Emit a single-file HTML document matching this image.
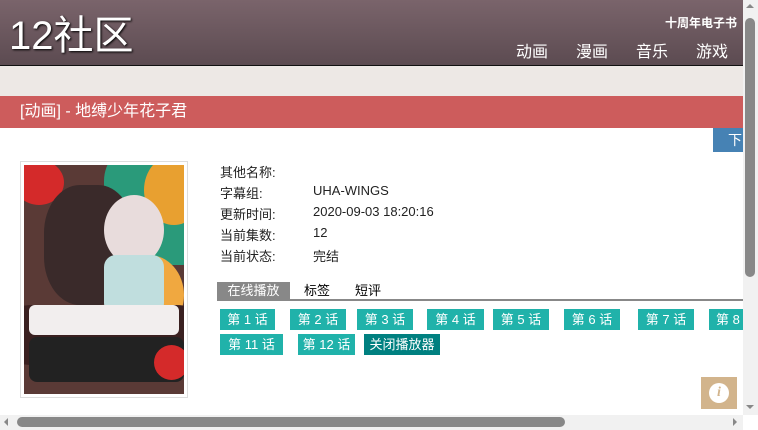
<!DOCTYPE html>
<html><head><meta charset="utf-8"><style>
*{margin:0;padding:0;box-sizing:border-box}
body{width:758px;height:430px;overflow:hidden;background:#fff;font-family:"Liberation Sans","Noto Sans CJK SC",sans-serif;position:relative}
.hdr{position:absolute;left:0;top:0;width:743px;height:66px;background:linear-gradient(#7a646b,#5c4b51);border-bottom:1px solid #111}
.logo{position:absolute;left:9px;top:13px;color:#fff;font-size:40px;line-height:46px;letter-spacing:0;text-shadow:1px 1px 2px #000}
.top{position:absolute;right:6px;top:14px;color:#fff;font-size:12px;font-weight:bold}
.nav{position:absolute;top:38px;color:#fff;font-size:16px}
.band{position:absolute;left:0;top:66px;width:743px;height:30px;background:#ede8e5}
.red{position:absolute;left:0;top:96px;width:743px;height:32px;background:#cd5c5c;color:#fff;font-size:16px;line-height:32px;padding-left:20px}
.blue{position:absolute;left:713px;top:128px;width:30px;height:24px;background:#4682b4;color:#fff;font-size:14px;line-height:24px;padding-left:15px;overflow:hidden}
.poster{position:absolute;left:20px;top:161px;width:168px;height:237px;border:1px solid #ddd;background:#fff}
.pi{position:absolute;left:3px;top:3px;width:160px;height:229px;overflow:hidden;background:#5a3a36}
.pi div{position:absolute;border-radius:50%}
.lab{position:absolute;left:220px;font-size:13px;color:#222}
.val{position:absolute;left:313px;font-size:13px;color:#222}
.tab{position:absolute;top:282px;height:18px;font-size:13px;line-height:18px}
.line{position:absolute;left:217px;top:299px;width:526px;height:2px;background:#888}
.b{position:absolute;height:21px;background:#20b2aa;color:#fff;font-size:13px;line-height:21px;text-align:center;white-space:nowrap;overflow:hidden}
.vs{position:absolute;left:743px;top:0;width:15px;height:415px;background:#f1f1f1}
.hs{position:absolute;left:0;top:415px;width:743px;height:15px;background:#f1f1f1}
</style></head><body>
<div class="hdr">
<div class="logo">12社区</div>
<div class="top">十周年电子书</div>
<div class="nav" style="left:516px">动画</div>
<div class="nav" style="left:576px">漫画</div>
<div class="nav" style="left:636px">音乐</div>
<div class="nav" style="left:696px">游戏</div>
</div>
<div class="band"></div>
<div class="red">[动画] - 地缚少年花子君</div>
<div class="blue">下载</div>
<div class="poster"><div class="pi">
<div style="left:80px;top:-20px;width:110px;height:120px;background:#2a9a7a;border-radius:30%"></div>
<div style="left:120px;top:-10px;width:60px;height:70px;background:#e8a030"></div>
<div style="left:-10px;top:-5px;width:50px;height:45px;background:#d42a2a"></div>
<div style="left:20px;top:20px;width:90px;height:120px;background:#3a2a2a;border-radius:40%"></div>
<div style="left:80px;top:30px;width:60px;height:70px;background:#e8dcdc"></div>
<div style="left:90px;top:90px;width:70px;height:80px;background:#f0a840"></div>
<div style="left:80px;top:90px;width:60px;height:60px;background:#c0dede;border-radius:20%"></div>
<div style="left:-10px;top:140px;width:180px;height:60px;background:#3a2020;border-radius:10%"></div>
<div style="left:5px;top:140px;width:150px;height:30px;background:#f2eeee;border-radius:6px"></div>
<div style="left:5px;top:172px;width:155px;height:45px;background:#222;border-radius:8px"></div>
<div style="left:130px;top:180px;width:35px;height:35px;background:#d42a2a"></div>
</div></div>
<div class="lab" style="top:162px">其他名称:</div>
<div class="lab" style="top:183px">字幕组:</div><div class="val" style="top:183px">UHA-WINGS</div>
<div class="lab" style="top:204px">更新时间:</div><div class="val" style="top:204px">2020-09-03 18:20:16</div>
<div class="lab" style="top:225px">当前集数:</div><div class="val" style="top:225px">12</div>
<div class="lab" style="top:246px">当前状态:</div><div class="val" style="top:246px">完结</div>
<div class="tab" style="left:217px;width:73px;background:#888;color:#fff;text-align:center">在线播放</div>
<div class="tab" style="left:304px">标签</div>
<div class="tab" style="left:355px">短评</div>
<div class="line"></div>
<div class="b" style="left:220px;top:309px;width:55px">第 1 话</div>
<div class="b" style="left:290px;top:309px;width:56px">第 2 话</div>
<div class="b" style="left:357px;top:309px;width:56px">第 3 话</div>
<div class="b" style="left:427px;top:309px;width:57px">第 4 话</div>
<div class="b" style="left:493px;top:309px;width:56px">第 5 话</div>
<div class="b" style="left:564px;top:309px;width:56px">第 6 话</div>
<div class="b" style="left:638px;top:309px;width:56px">第 7 话</div>
<div class="b" style="left:709px;top:309px;width:34px;text-align:left;padding-left:7px">第 8 话</div>
<div class="b" style="left:220px;top:334px;width:63px">第 11 话</div>
<div class="b" style="left:298px;top:334px;width:57px">第 12 话</div>
<div class="b" style="left:364px;top:334px;width:76px;background:#008080">关闭播放器</div>
<div style="position:absolute;left:701px;top:377px;width:36px;height:32px;background:#d2b48c"><div style="position:absolute;left:8px;top:6px;width:20px;height:20px;border-radius:50%;background:#fff;color:#d2b48c;font:italic bold 14px 'Liberation Serif',serif;text-align:center;line-height:20px">i</div></div>
<div class="vs"><div style="position:absolute;left:3px;top:4px;border:4px solid transparent;border-bottom-color:#888;border-top:0"></div><div style="position:absolute;left:2px;top:18px;width:10px;height:259px;background:#888;border-radius:5px"></div><div style="position:absolute;left:3px;top:405px;border:4px solid transparent;border-top-color:#888;border-bottom:0"></div></div>
<div class="hs"><div style="position:absolute;left:4px;top:3px;border:4px solid transparent;border-right-color:#888;border-left:0"></div><div style="position:absolute;left:17px;top:2px;width:548px;height:10px;background:#888;border-radius:5px"></div><div style="position:absolute;left:733px;top:3px;border:4px solid transparent;border-left-color:#888;border-right:0"></div></div>
</body></html>
